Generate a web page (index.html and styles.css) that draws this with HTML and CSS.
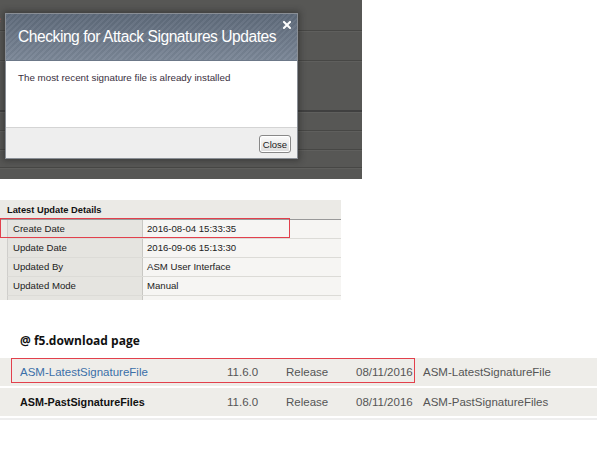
FILE: index.html
```html
<!DOCTYPE html>
<html>
<head>
<meta charset="utf-8">
<link rel="stylesheet" href="styles.css">
</head>
<body>
<div class="shot">
  <div class="bg-rows">
    <div class="bg-row r1"><span class="cut">e</span></div>
    <div class="bg-row r2"></div>
    <div class="bg-row r3 strong"></div>
    <div class="bg-row r4"></div>
    <div class="bg-row r5"></div>
    <div class="bg-row r6"></div>
  </div>
  <div class="dialog">
    <div class="dlg-head">
      <span class="dlg-title">Checking for Attack Signatures Updates</span>
      <svg class="dlg-x" width="8" height="8" viewBox="0 0 8 8"><path d="M1 1L7 7M7 1L1 7" stroke="#fff" stroke-width="2" stroke-linecap="square"/></svg>
    </div>
    <div class="dlg-body">The most recent signature file is already installed</div>
    <div class="dlg-foot"><button class="btn">Close</button></div>
  </div>
</div>

<div class="details">
  <div class="det-title">Latest Update Details</div>
  <div class="det-row"><div class="det-label">Create Date</div><div class="det-val">2016-08-04 15:33:35</div></div>
  <div class="det-row"><div class="det-label">Update Date</div><div class="det-val">2016-09-06 15:13:30</div></div>
  <div class="det-row"><div class="det-label">Updated By</div><div class="det-val">ASM User Interface</div></div>
  <div class="det-row"><div class="det-label">Updated Mode</div><div class="det-val">Manual</div></div>
  <div class="det-row partial"><div class="det-label"></div><div class="det-val"></div></div>
  <div class="mark mark-details"></div>
</div>

<div class="download">
  <div class="dl-heading">@ f5.download page</div>
  <div class="dl-table">
    <div class="dl-row">
      <span class="dl-name link">ASM-LatestSignatureFile</span>
      <span>11.6.0</span>
      <span>Release</span>
      <span>08/11/2016</span>
      <span>ASM-LatestSignatureFile</span>
      <div class="mark mark-dl"></div>
    </div>
    <div class="dl-row">
      <span class="dl-name bold">ASM-PastSignatureFiles</span>
      <span>11.6.0</span>
      <span>Release</span>
      <span>08/11/2016</span>
      <span>ASM-PastSignatureFiles</span>
    </div>
  </div>
</div>
</body>
</html>
```

FILE: styles.css
```css
html, body {
  margin: 0;
  padding: 0;
  background: #fff;
  font-family: "Liberation Sans", Arial, sans-serif;
}

.shot {
  position: relative;
  width: 362px;
  height: 179px;
  background: #575755;
  overflow: hidden;
}

.bg-row {
  border-bottom: 1px solid #474745;
  box-shadow: 0 1px 0 #5f5f5d;
  box-sizing: border-box;
  position: relative;
}
.bg-row.strong {
  border-bottom: 2px solid #404040;
}
.r1 { height: 31px; }
.r2 { height: 30px; }
.r3 { height: 51px; }
.r4 { height: 19px; }
.r5 { height: 19px; }
.r6 { height: 18px; }

.cut {
  display: block;
  margin-left: -5px;
  padding-top: 15px;
  font-size: 10px;
  font-weight: bold;
  color: #b5642a;
  line-height: 10px;
}

.dialog {
  position: absolute;
  left: 5px;
  top: 13px;
  width: 293px;
  box-shadow: 0 0 6px 2px rgba(30, 30, 30, 0.45);
  border: 1px solid #8a8f96;
  box-sizing: border-box;
}

.dlg-head {
  position: relative;
  height: 46px;
  display: flex;
  align-items: center;
  padding: 0 12px;
  background:
    repeating-linear-gradient(135deg, rgba(255,255,255,0.045) 0 2px, rgba(0,0,0,0.03) 2px 4px),
    linear-gradient(#5d6979, #7b8797);
  border-bottom: 1px solid #6c7888;
}
.dlg-title {
  color: #fff;
  font-size: 15.6px;
  letter-spacing: -0.46px;
  white-space: nowrap;
}
.dlg-x {
  position: absolute;
  right: 6px;
  top: 7px;
}

.dlg-body {
  background: #fff;
  height: 66px;
  box-sizing: border-box;
  padding: 11px 12px 0;
  font-size: 9.8px;
  line-height: 12px;
  color: #3a3040;
}

.dlg-foot {
  background: #eeeeee;
  border-top: 1px solid #d4d4d4;
  height: 31px;
  box-sizing: border-box;
  display: flex;
  justify-content: flex-end;
  align-items: flex-start;
  padding: 7px 6px 0 0;
}
.btn {
  width: 32px;
  height: 18px;
  padding: 0;
  font-family: "Liberation Sans", Arial, sans-serif;
  font-size: 9.5px;
  color: #1a1a1a;
  background: linear-gradient(#fbfbfb, #dcdcdc);
  border: 1px solid #888;
  border-radius: 3px;
  box-shadow: inset 0 0 0 1px #fff;
}

/* details table */
.details {
  position: relative;
  width: 341px;
  margin-top: 21px;
  background: #ebeae6;
  font-size: 9.6px;
  color: #222;
}
.det-title {
  height: 19px;
  line-height: 20px;
  padding-left: 7px;
  font-weight: bold;
  font-size: 9.3px;
  color: #111;
  border-bottom: 1px solid #999;
}
.det-row {
  display: flex;
  height: 19px;
  box-sizing: border-box;
  border-bottom: 1px solid #dcdbd7;
  margin-left: 7px;
  border-left: 1px solid #cfcecb;
}
.det-row.partial {
  height: 4px;
  border-bottom: none;
}
.det-label {
  width: 135px;
  background: #e5e4e0;
  border-right: 1px solid #c9c8c4;
  padding-left: 5px;
  line-height: 18px;
  box-sizing: border-box;
  color: #222;
}
.det-val {
  flex: 1;
  background: #f6f5f3;
  padding-left: 4px;
  line-height: 18px;
  color: #222;
}

.mark {
  position: absolute;
  border: 1.3px solid #e2404c;
  box-sizing: border-box;
  pointer-events: none;
}
.mark-details {
  left: 0;
  top: 18px;
  width: 290px;
  height: 20px;
}

/* download section */
.download {
  margin-top: 33px;
}
.dl-heading {
  padding-left: 20px;
  font-family: "Open Sans", "Noto Sans", sans-serif;
  font-weight: bold;
  font-size: 12px;
  line-height: 16px;
  color: #111;
}
.dl-table {
  margin-top: 9px;
  width: 597px;
  border-bottom: 2px solid #eeeeee;
  padding-bottom: 2px;
}
.dl-row {
  position: relative;
  display: grid;
  grid-template-columns: 207px 59px 70px 67px 1fr;
  align-items: center;
  height: 28px;
  padding-left: 20px;
  background: #eeede9;
  font-size: 11.5px;
  color: #555;
}
.dl-row + .dl-row {
  margin-top: 2px;
}
.dl-name.link { color: #3b6fa8; }
.dl-name.bold { color: #111; font-weight: bold; font-size: 10.8px; }
.mark-dl {
  left: 11px;
  top: 0;
  width: 404px;
  height: 25px;
}
```
